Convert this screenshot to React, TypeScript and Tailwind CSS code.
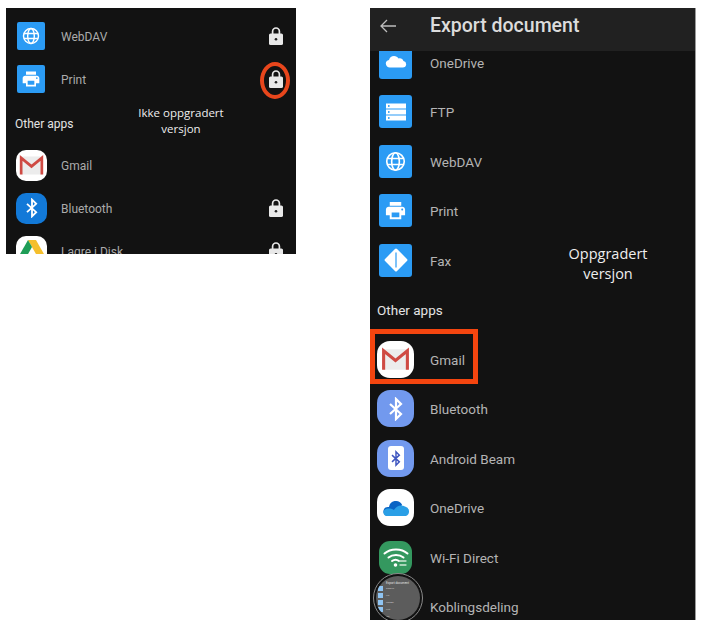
import React from 'react';

const Lock = () => (
  <svg width="14" height="18" viewBox="0 0 14 18">
    <path d="M3.600 7V4.400a3.400 3.400 0 0 1 6.800 0V7" fill="none" stroke="#e8e8e8" strokeWidth="1.700" />
    <rect x="0" y="6.500" width="14" height="11.500" rx="1.600" fill="#e8e8e8" />
    <circle cx="7" cy="12.200" r="1.300" fill="#222" />
  </svg>
);

const Globe = ({ size }: { size: number }) => (
  <svg width={size} height={size} viewBox="0 0 24 24" fill="none" stroke="white" strokeWidth="1.900">
    <circle cx="12" cy="12" r="10" />
    <ellipse cx="12" cy="12" rx="4.400" ry="10" />
    <path d="M2.500 8.600h19M2.500 15.400h19" />
  </svg>
);

const Printer = ({ size }: { size: number }) => (
  <svg width={size} height={size} viewBox="0 0 24 24" fill="white">
    <path d="M19 8H5c-1.660 0-3 1.340-3 3v6h4v4h12v-4h4v-6c0-1.660-1.340-3-3-3zm-3 11H8v-5h8v5zm3-7c-.55 0-1-.45-1-1s.45-1 1-1 1 .45 1 1-.45 1-1 1zm-1-9H6v4h12V3z" />
  </svg>
);

// clipped by the header in the reference, so the glyph sits high in its tile
const Cloud = () => (
  <svg width="24" height="24" viewBox="0 0 24 24" fill="white">
    <path d="M6 17.500a4 4 0 0 1-4.200-3.900 3.800 3.800 0 0 1 3.200-3.700A5.400 5.400 0 0 1 10 6c2 0 3.700 1 4.600 2.600.6-.2 1.100-.3 1.600-.3a4.100 4.100 0 0 1 3.300 2.700 3.300 3.300 0 0 1 2.700 3.200c0 2-1.500 3.300-3.400 3.300z" />
  </svg>
);

const Server = () => (
  <svg width="22" height="22" viewBox="0 0 22 22">
    {[2.500, 8.500, 14.500].map((y) => (
      <g key={y}>
        <rect x="1" y={y} width="20" height="5" fill="white" />
        <circle cx="3.800" cy={y + 2.500} r="0.900" fill="#2b9bf4" />
      </g>
    ))}
  </svg>
);

const Diamond = () => (
  <svg width="26" height="26" viewBox="0 0 26 26">
    <rect x="4.500" y="4.500" width="17" height="17" rx="1.500" fill="white" transform="rotate(45 13 13)" />
    <path d="M13 5.500v15" stroke="#2b9bf4" strokeWidth="1.200" />
  </svg>
);

const BluetoothGlyph = ({ size, color }: { size: number; color: string }) => (
  <svg width={size} height={size} viewBox="0 0 24 24" fill="none" stroke={color} strokeWidth="2.200">
    <path d="m6 7 11 10-5 5V2l5 5L6 17" />
  </svg>
);

const GmailGlyph = ({ size }: { size: number }) => (
  <svg width={size} height={size} viewBox="0 0 30 30">
    <path d="M3 5h24v20H3z" fill="#ececec" />
    <path d="M3.500 25V6.500L15 16 26.500 6.500V25" fill="none" stroke="#cf4a43" strokeWidth="3" />
  </svg>
);

const Drive = () => (
  <svg width="28" height="28" viewBox="0 0 28 28">
    <path d="M10 3h8l8.500 15h-8z" fill="#f5bf2c" />
    <path d="M10 3 1.500 18l4 7L14 10z" fill="#1f9d57" />
    <path d="M9.500 18h17l-4 7h-17z" fill="#3a7ee8" />
  </svg>
);

const OneDriveGlyph = () => (
  <svg width="28" height="20" viewBox="0 0 28 20">
    <path d="M7 9a7 7 0 0 1 13-2.500L16 18H5a4.500 4.500 0 0 1 2-9z" fill="#0a64c4" />
    <path d="M12 12c2-4 7-6 11-3.500a5 5 0 0 1 1 9.500H5c-3 0-4.500-3-3-5.500 2-2.500 6-2.500 10-.5z" fill="#2a9fe6" />
  </svg>
);

const Wifi = () => (
  <svg width="30" height="30" viewBox="0 0 30 30" fill="none" stroke="white" strokeWidth="2" strokeLinecap="round">
    <path d="M3.500 11.500c6-5.500 17-5.500 23 0" />
    <path d="M7.500 15.500c4-3.500 11-3.500 15 0" />
    <path d="M11 19c2-1.500 5-1.500 7 0" />
    <circle cx="14.500" cy="23" r="0.800" fill="white" />
    <path d="M19 19h6M19 23h6" strokeWidth="1.300" stroke="#cfe8d8" />
  </svg>
);

type Item = { label: string; icon?: React.ReactNode; tile?: string; lock?: boolean; section?: boolean };

const blue = 'bg-[#2b9bf4] rounded-[3px] w-[33px] h-[33px]';
const blueSmall = 'bg-[#2b9bf4] rounded-[2px] w-[28px] h-[28px]';
const squircleSmall = 'rounded-[10px] w-[31px] h-[31px]';
const squircle = 'rounded-[13px] w-[37px] h-[37px]';

const leftItems: Item[] = [
  { label: 'WebDAV', icon: <Globe size={18} />, tile: blueSmall, lock: true },
  { label: 'Print', icon: <Printer size={20} />, tile: blueSmall, lock: true },
  { label: 'Other apps', section: true },
  { label: 'Gmail', icon: <GmailGlyph size={27} />, tile: `${squircleSmall} bg-white -ml-px` },
  { label: 'Bluetooth', icon: <BluetoothGlyph size={20} color="white" />, tile: `${squircleSmall} bg-[#1279d8] -ml-px`, lock: true },
  { label: 'Lagre i Disk', icon: <Drive />, tile: `${squircleSmall} bg-white -ml-px`, lock: true },
];

const rightItems: Item[] = [
  { label: 'OneDrive', icon: <Cloud />, tile: blue },
  { label: 'FTP', icon: <Server />, tile: blue },
  { label: 'WebDAV', icon: <Globe size={21} />, tile: blue },
  { label: 'Print', icon: <Printer size={23} />, tile: blue },
  { label: 'Fax', icon: <Diamond />, tile: blue },
  { label: 'Other apps', section: true },
  { label: 'Gmail', icon: <GmailGlyph size={31} />, tile: `${squircle} bg-white -ml-0.5` },
  { label: 'Bluetooth', icon: <BluetoothGlyph size={24} color="white" />, tile: `${squircle} bg-[#7299ee] -ml-0.5` },
  {
    label: 'Android Beam',
    icon: (
      <span className="flex items-center justify-center w-[16px] h-[24px] rounded-[3px] bg-white">
        <BluetoothGlyph size={17} color="#3f56c0" />
      </span>
    ),
    tile: `${squircle} bg-[#7299ee] -ml-0.5`,
  },
  { label: 'OneDrive', icon: <OneDriveGlyph />, tile: `${squircle} bg-white -ml-0.5` },
  { label: 'Wi-Fi Direct', icon: <Wifi />, tile: 'rounded-[11px] w-[33px] h-[33px] bg-[#34985f]' },
  { label: 'Koblingsdeling' },
];

const Row = ({ item, small }: { item: Item; small?: boolean }) => {
  if (item.section) {
    return (
      <div className={small ? 'flex items-center h-[43px] pl-[9px] pt-[4px] text-[12px] text-[#e4e4e4]' : 'flex items-center h-[49.500px] pl-[7px] pt-[2px] text-[13.500px] text-[#e4e4e4]'}>
        {item.label}
      </div>
    );
  }
  return (
    <div className={small ? 'flex items-center h-[43px] pl-[11px] pr-[13px]' : 'flex items-center h-[49.500px] pl-[9px]'}>
      <div className={small ? 'w-[44px] shrink-0' : 'w-[51px] shrink-0'}>
        {item.tile && <div className={`flex items-center justify-center overflow-hidden ${item.tile}`}>{item.icon}</div>}
      </div>
      <span className={small ? 'flex-1 pt-[2px] text-[12px] text-[#ababab]' : 'flex-1 pt-[2px] text-[13.500px] text-[#b4b4b4]'}>{item.label}</span>
      {item.lock && <Lock />}
    </div>
  );
};

const miniRows = ['OneDrive', 'FTP', 'WebDAV', 'Print', 'Fax'];

export default function App() {
  return (
    <div className="relative w-[710px] h-[643px] overflow-hidden bg-white font-['Roboto',sans-serif]">
      <div className="flex items-start gap-[74px] pt-2 pl-1.5">
        <section className="relative w-[290px] h-[246px] overflow-hidden bg-[#121212] pt-[6.500px]">
          {leftItems.map((item) => (
            <Row key={item.label} item={item} small />
          ))}
          <div className="absolute left-[254px] top-[54px] w-[30px] h-[37px] rounded-[50%] border-[4px] border-[#e8461c]" />
          <p className="absolute left-[115px] top-[97px] w-[120px] text-center text-[11.500px] leading-[15.500px] text-[#eeeeee] font-['Open_Sans',sans-serif]">
            Ikke oppgradert
            <br />
            versjon
          </p>
        </section>

        <section className="relative w-[326px] h-[612px] overflow-hidden bg-[#121212] border-r border-[#9a9a9a]">
          <header className="relative z-10 flex items-center h-[43px] bg-[#212121] pl-[10px] pb-2 text-[#dcdcdc]">
            <svg width="16" height="14" viewBox="0 0 16 14" fill="none" stroke="#bdbdbd" strokeWidth="1.300">
              <path d="M16 7H1M7 1 1 7l6 6" />
            </svg>
            <h1 className="ml-[34px] text-[19.500px] font-medium">Export document</h1>
          </header>
          <div className="mt-[-13.750px]">
            {rightItems.map((item, i) => (
              <Row key={i} item={item} />
            ))}
          </div>
          <p className="absolute left-[178px] top-[236px] w-[120px] text-center text-[14.500px] leading-[19.500px] text-[#eeeeee] font-['Open_Sans',sans-serif]">
            Oppgradert
            <br />
            versjon
          </p>
          <div className="absolute left-0 top-[321px] w-[108px] h-[55px] border-[5px] border-[#f4450f]" />
          <div className="absolute left-[3px] top-[565px] w-[50px] h-[50px] rounded-full border border-[#8a8a8a] bg-[#121212] p-[2px] z-20">
            <div className="w-full h-full rounded-full overflow-hidden bg-[#5c5c5c] pl-[2px] pt-[5px]">
              <p className="ml-[8px] text-[3px] leading-[4px] text-[#e0e0e0]">Export document</p>
              {miniRows.map((label) => (
                <div key={label} className="flex items-center gap-[3px] h-[7px] text-[2px] text-[#cfcfcf]">
                  <span className="w-[5px] h-[5px] bg-[#8fc4f2]" />
                  {label}
                </div>
              ))}
            </div>
          </div>
        </section>
      </div>
    </div>
  );
}
